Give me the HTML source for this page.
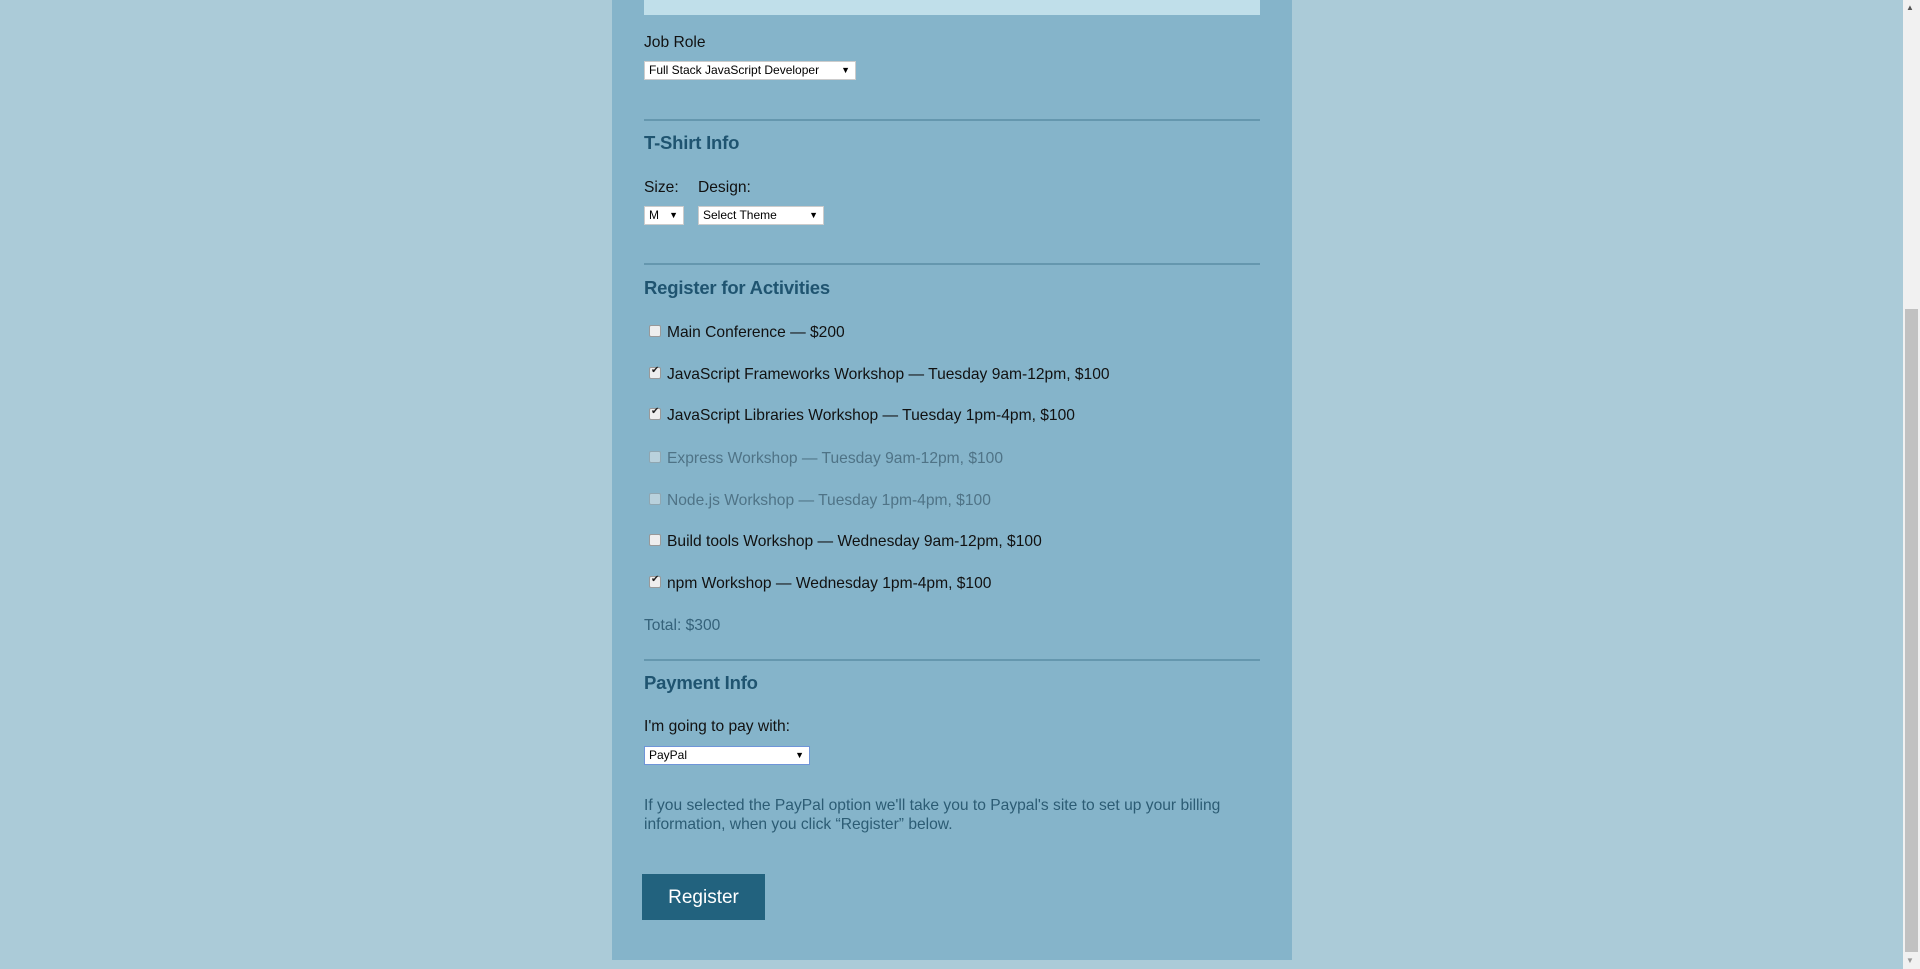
<!DOCTYPE html>
<html><head><meta charset="utf-8"><style>
*{margin:0;padding:0;box-sizing:border-box}
body{width:1920px;height:969px;background:#abcbd8;font-family:"Liberation Sans",sans-serif;overflow:hidden;position:relative}
.a{position:absolute;white-space:nowrap}
#panel{left:612px;top:0;width:680px;height:960px;background:#85b4ca}
.bar{left:644px;top:0;width:616px;height:15px;background:#c0dfea}
.hr{left:644px;width:616px;height:2px;background:#6597ae}
.lbl{font-size:15.6px;color:#111;line-height:20px}
.h{font-size:18.5px;color:#1f5470;line-height:24px;font-weight:bold;letter-spacing:-0.2px}
.sel{background:#fff;border:1px solid #ccc;font-size:12px;color:#000;line-height:16px;padding-left:4px}
.sel:after{content:"▼";position:absolute;right:5px;top:0;font-size:9px}
.cb{width:12px;height:12px;border:1px solid #999;background:#eee;border-radius:2px;left:649px}
.cb.on:after{content:"✔";position:absolute;left:1px;top:-3px;font-size:10px;color:#222}
.cb.dis{opacity:.5}
.act{left:667px;font-size:15.6px;color:#111;line-height:20px}
.act.dis{color:#4f7386}
#sb{left:1903px;top:0;width:17px;height:969px;background:#f1f1f1}
#th{left:1905px;top:309px;width:13px;height:643px;background:#c1c1c1}
</style></head><body>
<div class="a" id="panel"></div>
<div class="a bar"></div>
<div class="a lbl" style="left:644px;top:33px">Job Role</div>
<div class="a sel" style="left:644px;top:61px;width:212px;height:19px">Full Stack JavaScript Developer</div>
<div class="a hr" style="top:119px"></div>
<div class="a h" style="left:644px;top:131px">T-Shirt Info</div>
<div class="a lbl" style="left:644px;top:178px">Size:</div>
<div class="a lbl" style="left:698px;top:178px">Design:</div>
<div class="a sel" style="left:644px;top:206px;width:40px;height:19px">M</div>
<div class="a sel" style="left:698px;top:206px;width:126px;height:19px">Select Theme</div>
<div class="a hr" style="top:263px"></div>
<div class="a h" style="left:644px;top:276px">Register for Activities</div>
<div class="a cb" style="top:325px"></div><div class="a act" style="top:323px">Main Conference — $200</div>
<div class="a cb on" style="top:367px"></div><div class="a act" style="top:365px">JavaScript Frameworks Workshop — Tuesday 9am-12pm, $100</div>
<div class="a cb on" style="top:408px"></div><div class="a act" style="top:406px">JavaScript Libraries Workshop — Tuesday 1pm-4pm, $100</div>
<div class="a cb dis" style="top:451px"></div><div class="a act dis" style="top:449px">Express Workshop — Tuesday 9am-12pm, $100</div>
<div class="a cb dis" style="top:493px"></div><div class="a act dis" style="top:491px">Node.js Workshop — Tuesday 1pm-4pm, $100</div>
<div class="a cb" style="top:534px"></div><div class="a act" style="top:532px">Build tools Workshop — Wednesday 9am-12pm, $100</div>
<div class="a cb on" style="top:576px"></div><div class="a act" style="top:574px">npm Workshop — Wednesday 1pm-4pm, $100</div>
<div class="a lbl" style="left:644px;top:616px;color:#35627a">Total: $300</div>
<div class="a hr" style="top:659px"></div>
<div class="a h" style="left:644px;top:671px">Payment Info</div>
<div class="a lbl" style="left:644px;top:717px">I'm going to pay with:</div>
<div class="a sel" style="left:644px;top:746px;width:166px;height:19px;border:1px solid #6f95d8">PayPal</div>
<div class="a" style="left:644px;top:796px;font-size:15.6px;line-height:19px;color:#2c5c74;white-space:normal;width:616px">If you selected the PayPal option we'll take you to Paypal's site to set up your billing<br>information, when you click “Register” below.</div>
<div class="a" style="left:642px;top:874px;width:123px;height:46px;background:#22627e;color:#fff;font-size:19px;line-height:48px;text-align:center">Register</div>
<div class="a" id="sb"></div><div class="a" id="th"></div>
<div class="a" style="left:1906px;top:3px;font-size:8px;color:#555">▲</div>
<div class="a" style="left:1906px;top:956px;font-size:8px;color:#999">▼</div>
</body></html>
